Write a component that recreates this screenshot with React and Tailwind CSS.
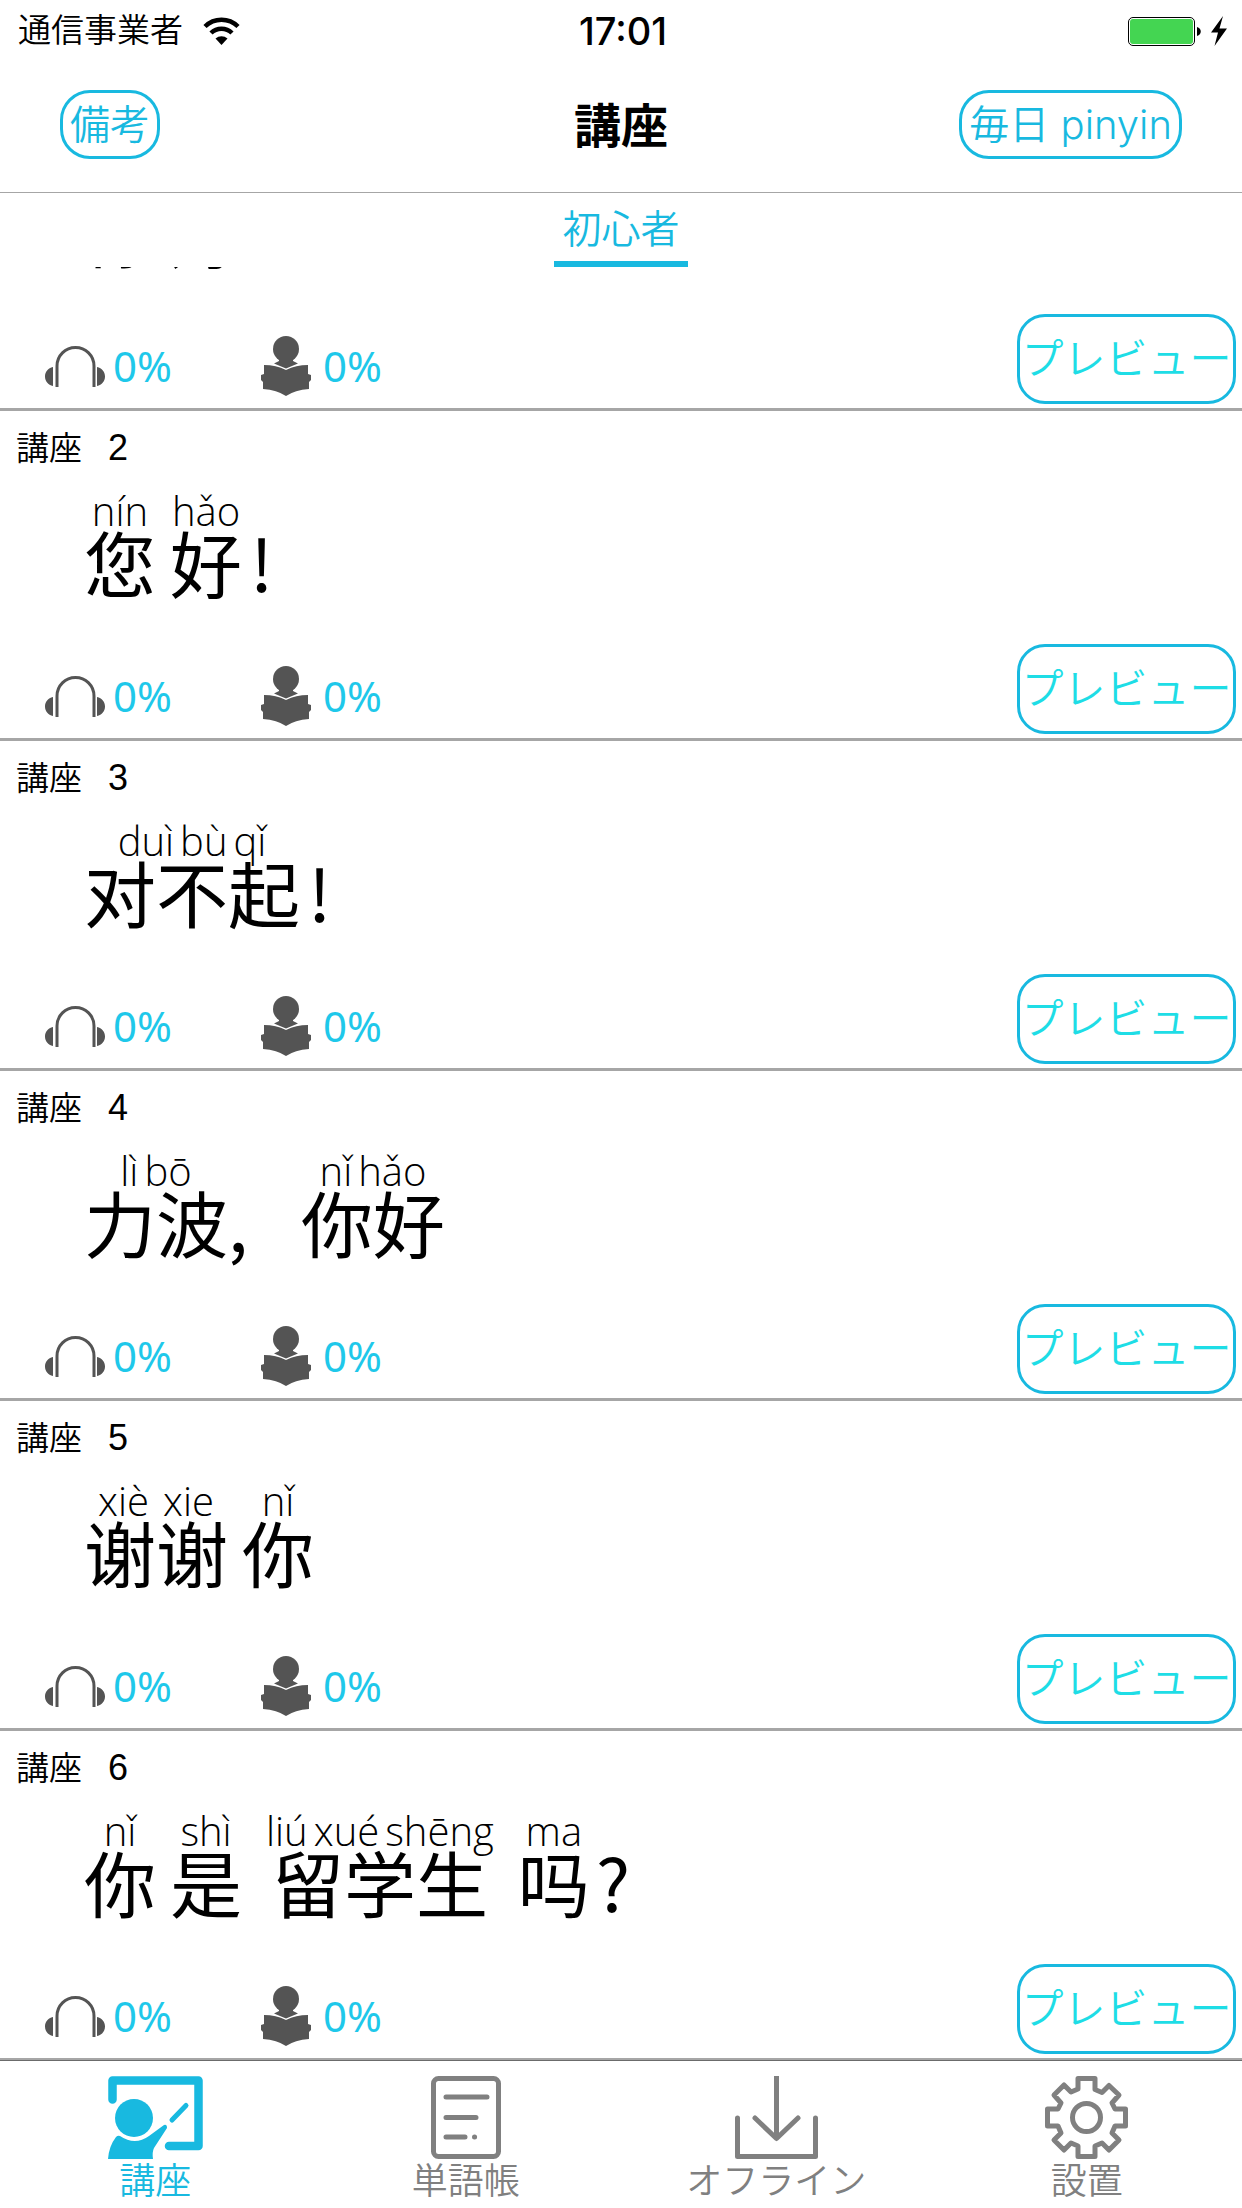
const CJK = 'font-["Inter","Noto_Sans_CJK_JP",sans-serif] font-[350]';
const SC = 'font-["Noto_Sans_CJK_SC",sans-serif] font-normal';
const PINYIN = 'font-["Open_Sans","Noto_Sans",sans-serif] font-[350]';
const LATIN = 'font-["Liberation_Sans",sans-serif] font-normal';
const PERCENT = 'font-["Noto_Sans",sans-serif] font-normal';

const lessons = [
  { id: 1, scrolled: true, words: [{ h: "你" }, { h: "好", gap: "ml-3.5" }] },
  { id: 2, words: [{ p: "nín", h: "您" }, { p: "hǎo", h: "好", gap: "ml-3.5" }, { h: "!", gap: "ml-2" }] },
  { id: 3, words: [{ p: "duì bù qǐ", h: "对不起" }, { h: "!", gap: "ml-2" }] },
  { id: 4, words: [{ p: "lì bō", h: "力波" }, { h: "," }, { p: "nǐ hǎo", h: "你好", gap: "ml-[53px]" }] },
  { id: 5, words: [{ p: "xiè xie", h: "谢谢", spread: "gap-3.5" }, { p: "nǐ", h: "你", gap: "ml-3.5" }] },
  {
    id: 6,
    words: [
      { p: "nǐ", h: "你" },
      { p: "shì", h: "是", gap: "ml-3.5" },
      { p: "liú xué shēng", h: "留学生", gap: "ml-6" },
      { p: "ma", h: "吗", gap: "ml-6" },
      { h: "?", gap: "ml-1.5" },
    ],
  },
];

function Wifi() {
  return (
    <svg className="h-7 w-[37px]" viewBox="0 0 37 28" fill="none" stroke="#000" strokeWidth="4.500" aria-hidden="true">
      <path d="M2 9.500a23.500 23.500 0 0 1 33 0" />
      <path d="M8 16a15 15 0 0 1 21 0" />
      <path d="M12.500 21.500a9.500 9.500 0 0 1 12 0L18.500 28z" fill="#000" stroke="none" />
    </svg>
  );
}

function Battery() {
  return (
    <svg className="h-8 w-[100px]" viewBox="0 0 100 32" aria-hidden="true">
      <rect x="0.500" y="2.500" width="66" height="28" rx="4.500" fill="#fff" stroke="#000" />
      <rect x="2" y="4" width="63" height="25" rx="3" fill="#44d552" />
      <path d="M69 12c5 1 5 8 0 9z" />
      <path d="M95 1 83 17.500h7L86.500 31 99 13.500h-7.500z" />
    </svg>
  );
}

function Headphones() {
  return (
    <svg className="h-[60px] w-[60px]" viewBox="0 0 60 60" fill="#545454" aria-hidden="true">
      <path d="M12 51V30a18.500 18.500 0 0 1 37 0v21" fill="none" stroke="#545454" strokeWidth="3" />
      <path d="M8 31v19C3 49 0 45 0 40.500S3 32 8 31zM52 31v19c5-1 8-5 8-9.500S57 32 52 31z" />
    </svg>
  );
}

function Reader() {
  return (
    <svg className="h-[60px] w-[50px]" viewBox="0 0 50 60" fill="#545454" aria-hidden="true">
      <circle cx="25" cy="13" r="13" />
      <path d="M18 22h14v3l5 2.500-12 5-12-5 5-2.500z" />
      <path d="M3 29q12 0 22 5 10-5 22-5v9l3 1v5l-2 2v7q-14 1-23 7-9-6-23-7v-7l-2-2v-5l3-1z" />
    </svg>
  );
}

function TeacherIcon() {
  return (
    <svg className="h-[83px] w-[95px]" viewBox="0 0 95 83" fill="#18b9e0" aria-hidden="true">
      <path d="M4.500 23.500V4.500H90.500V70H61" fill="none" stroke="#18b9e0" strokeWidth="8.500" strokeLinecap="round" strokeLinejoin="round" />
      <circle cx="26" cy="42" r="19" />
      <path d="M64 44 78 29.500" stroke="#18b9e0" strokeWidth="5" strokeLinecap="round" />
      <path d="M0 83q1-13 8-22 2-2 4-1 15 10 29 0L56 49q3-1 3 3L46 72q-2 4-1 11z" />
    </svg>
  );
}

function NotebookIcon() {
  return (
    <svg className="h-[83px] w-[70px]" viewBox="0 0 70 83" fill="none" stroke="#808080" strokeWidth="5" strokeLinecap="round" aria-hidden="true">
      <rect x="2.500" y="2.500" width="65" height="78" rx="5" />
      <path d="M15 21h41M15 41.500h30M15 61h19M43.500 61h.1" />
    </svg>
  );
}

function DownloadIcon() {
  return (
    <svg className="h-[83px] w-[83px]" viewBox="0 0 83 83" fill="none" stroke="#808080" strokeWidth="5" strokeLinejoin="round" aria-hidden="true">
      <path d="M2.500 42v38.500h78V42" strokeLinecap="round" />
      <path d="M41.500 0v61" />
      <path d="M20 42l21.500 20.500L63 42" strokeLinecap="round" />
    </svg>
  );
}

function GearIcon() {
  return (
    <svg className="h-[83px] w-[83px]" viewBox="0 0 83 83" fill="none" stroke="#808080" strokeWidth="5" strokeLinejoin="round" aria-hidden="true">
      <path d="M33 2.500h17v11l7 3 7-7L74 19l-7 8 3 6h10.500v17H70l-3 7 7 7-10 10-7-7-7 3v10.500H33V70l-7-3-7 7L9 64l7-7-3-7H2.500V33H13l3-6-7-8L19 9l7 7 7-3z" />
      <circle cx="41.500" cy="41.500" r="14" />
    </svg>
  );
}

function Word({ p = "", h, gap = "", spread = "gap-1.5" }) {
  return (
    <div className={`flex flex-col items-center ${gap}`}>
      <span className={`flex h-11 text-[40px] leading-[48px] ${spread} ${PINYIN}`}>
        {p.split(" ").map((s) => (
          <span key={s}>{`${s} `}</span>
        ))}
      </span>
      <span className={`text-[72px] leading-[60px] ${SC}`}>{h}</span>
    </div>
  );
}

function Lesson({ id, words, scrolled }) {
  return (
    <li className="flex h-[330px] shrink-0 flex-col border-b-[3px] border-[#a6a6a6]">
      <h2 className="flex h-16 items-center gap-[26px] pt-2.5 pl-4">
        {!scrolled && (
          <>
            <span className={`text-[33px] leading-[54px] ${CJK}`}>講座</span>
            <span className={`text-[36px] leading-[54px] ${LATIN}`}>{id}</span>
          </>
        )}
      </h2>
      <div className="flex pt-3 pl-[84px]">
        {words.map((w, i) => (
          <Word key={i} {...w} />
        ))}
      </div>
      <div className="mt-auto flex items-end justify-between pr-1.5 pb-1">
        <div className={`flex items-center pb-2 pl-[45px] text-[42px] leading-[60px] text-[#1ec8ea] ${PERCENT}`}>
          <Headphones />
          <span className="ml-2 w-[148px]">0%</span>
          <Reader />
          <span className="ml-3">0%</span>
        </div>
        <button className={`h-[90px] w-[219px] rounded-[28px] border-[3px] border-[#18b9e0] text-center text-[42px] leading-[84px] whitespace-nowrap text-[#1edde6] ${CJK}`}>
          プレビュー
        </button>
      </div>
    </li>
  );
}

const tabs = [
  { label: "講座", Icon: TeacherIcon, active: true },
  { label: "単語帳", Icon: NotebookIcon },
  { label: "オフライン", Icon: DownloadIcon },
  { label: "設置", Icon: GearIcon },
];

const pill = "h-[69px] rounded-[30px] border-[3px] border-[#18b9e0] px-[7px] text-[40px] leading-[63px] whitespace-nowrap text-[#18b9e0]";

export default function App() {
  return (
    <div className={`flex h-screen flex-col overflow-hidden bg-white text-black ${CJK}`}>
      <div className="grid h-[60px] shrink-0 grid-cols-3 items-center pt-0.5 pr-3.5 pl-[18px]">
        <div className="flex items-center gap-5 text-[33px]">
          通信事業者
          <Wifi />
        </div>
        <time className="text-center text-[38px] font-medium">17:01</time>
        <div className="flex justify-end">
          <Battery />
        </div>
      </div>
      <header className="grid h-[133px] shrink-0 grid-cols-3 items-center border-b border-[#a6a6a6] px-[60px] pb-[3px]">
        <div>
          <button className={pill}>備考</button>
        </div>
        <h1 className="pt-1 text-center text-[47px] font-bold">講座</h1>
        <div className="text-right">
          <button className={pill}>毎日 pinyin</button>
        </div>
      </header>
      <nav className="flex h-[74px] shrink-0 justify-center">
        <button className="border-b-[6px] border-[#18b9e0] px-2 pt-1 text-[39px] leading-[64px] text-[#18b9e0]">初心者</button>
      </nav>
      <ul className="flex min-h-0 flex-1 flex-col justify-end overflow-hidden">
        {lessons.map((l) => (
          <Lesson key={l.id} {...l} />
        ))}
      </ul>
      <nav className="-mt-px grid h-[148px] shrink-0 grid-cols-4 border-t border-[#6b6b6b] bg-white">
        {tabs.map(({ label, Icon, active }) => (
          <button key={label} className={`flex flex-col items-center pt-[15px] text-[36px] leading-[44px] ${active ? "text-[#18b9e0]" : "text-[#808080]"}`}>
            <Icon />
            <span>{label}</span>
          </button>
        ))}
      </nav>
    </div>
  );
}
